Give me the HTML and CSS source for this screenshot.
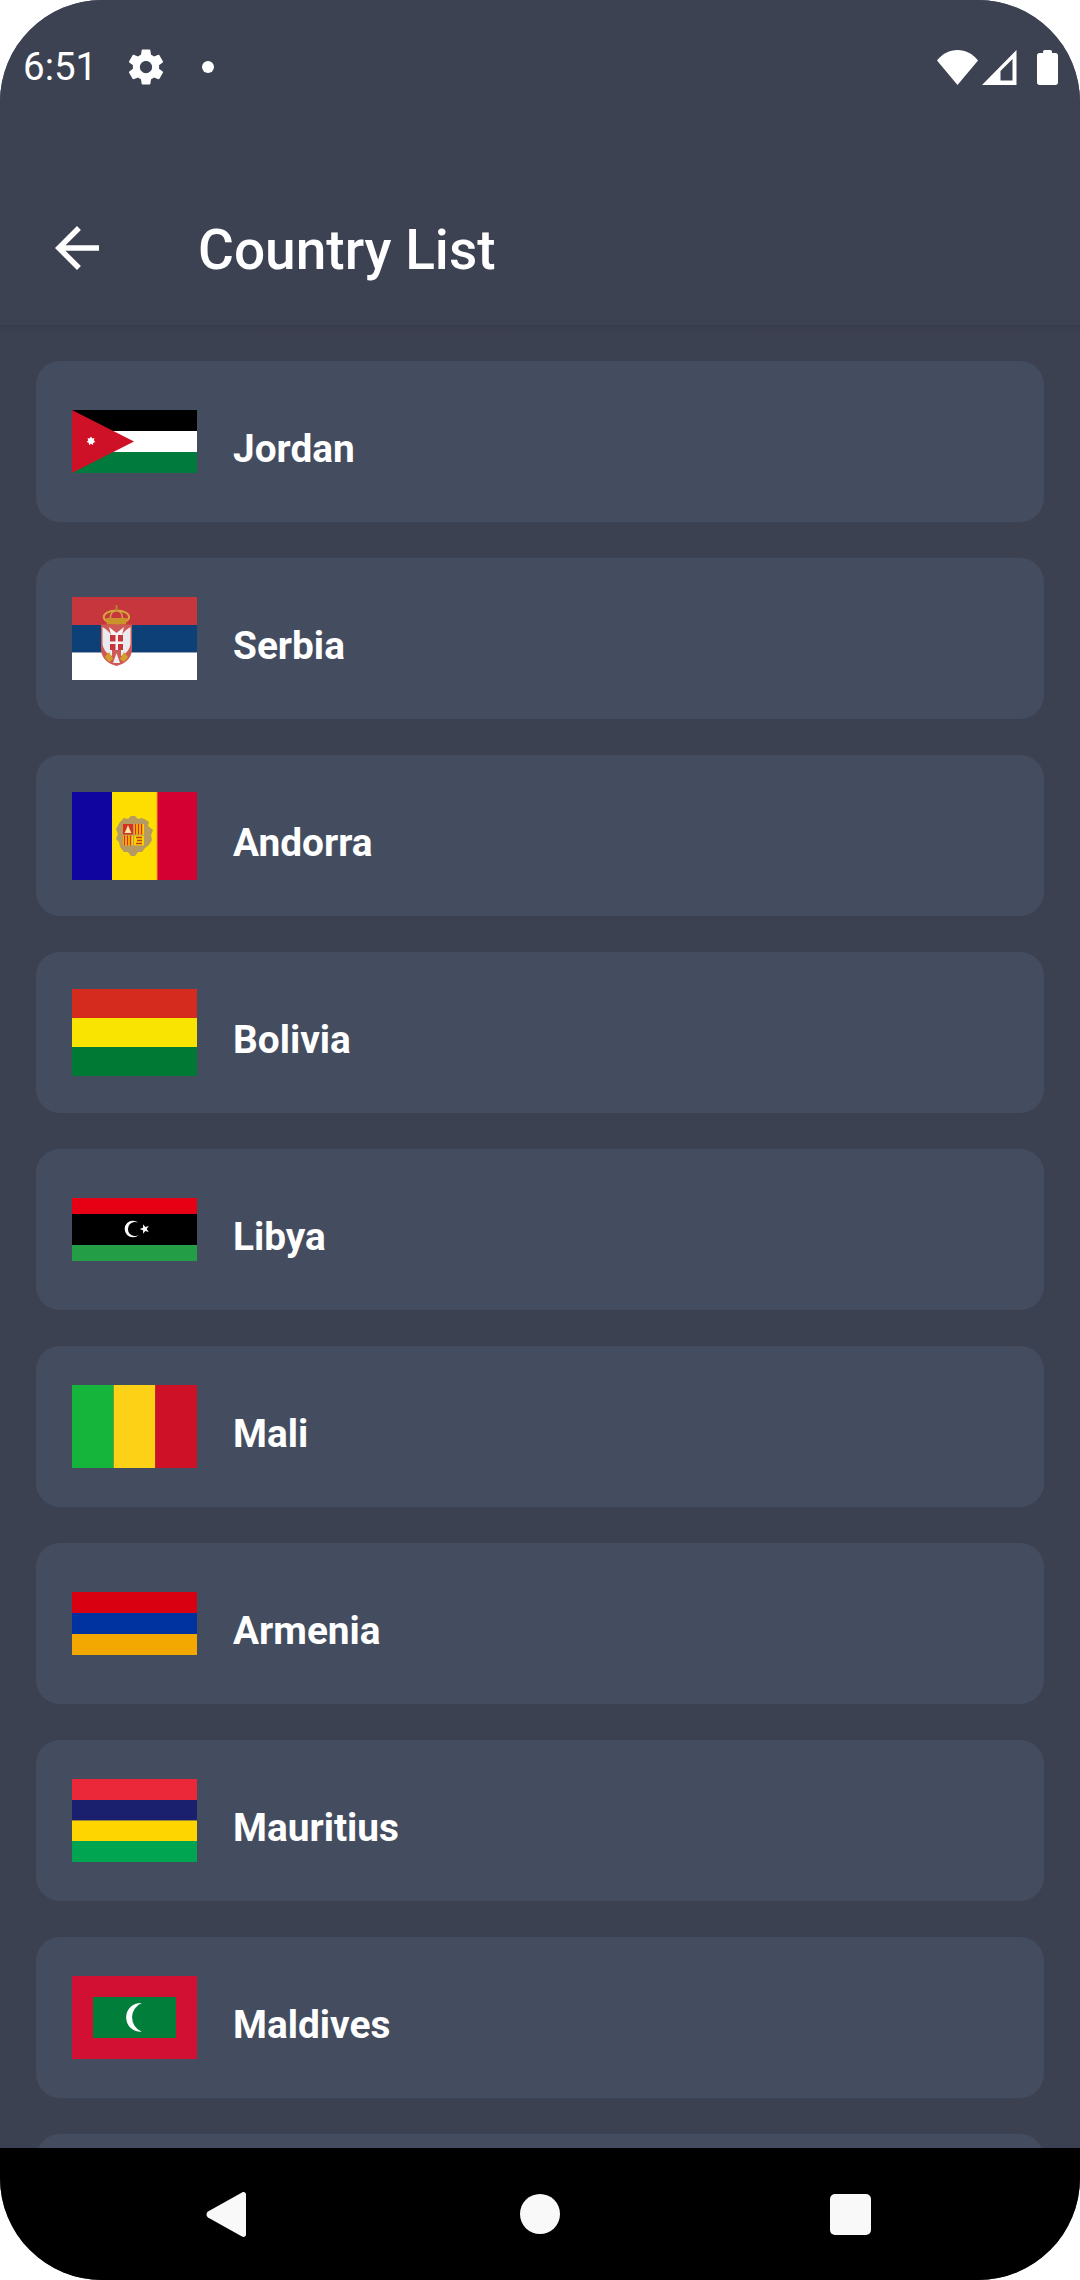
FILE: index.html
```html
<!DOCTYPE html>
<html lang="en">
<head>
<meta charset="utf-8">
<title>Country List</title>
<link rel="stylesheet" href="styles.css">
</head>
<body>
<div class="screen">
  <header class="header">
    <div class="status">
      <div class="status-left">
        <span class="time">6:51</span>
        <svg class="gear" width="42" height="42" viewBox="0 0 24 24"><path d="M19.430 12.980c.04-.32.07-.64.07-.98s-.03-.66-.07-.98l2.110-1.650c.19-.15.24-.42.12-.64l-2-3.460c-.12-.22-.39-.3-.61-.22l-2.490 1c-.52-.4-1.080-.73-1.690-.98l-.38-2.650C14.460 2.180 14.250 2 14 2h-4c-.25 0-.46.18-.49.42l-.38 2.650c-.61.25-1.170.59-1.690.98l-2.490-1c-.23-.09-.49 0-.61.22l-2 3.460c-.13.22-.07.49.12.64l2.110 1.650c-.04.32-.07.65-.07.98s.03.66.07.98l-2.110 1.650c-.19.15-.24.42-.12.64l2 3.460c.12.22.39.3.61.22l2.490-1c.52.4 1.080.73 1.690.98l.38 2.650c.03.24.24.42.49.42h4c.25 0 .46-.18.49-.42l.38-2.650c.61-.25 1.170-.59 1.690-.98l2.490 1c.23.09.49 0 .61-.22l2-3.460c.12-.22.07-.49-.12-.64l-2.110-1.650zM12 15.500c-1.930 0-3.500-1.570-3.500-3.500s1.570-3.500 3.500-3.500 3.500 1.570 3.500 3.500-1.570 3.500-3.500 3.500z" fill="#fff"/></svg>
        <span class="dot"></span>
      </div>
      <div class="status-right">
        <svg width="41" height="35" viewBox="0 0 41 35"><path d="M0 10.500C5.500 3.500 12.500 0 20.500 0S35.500 3.500 41 10.500L20.500 35z" fill="#fff"/></svg>
        <svg width="35" height="35" viewBox="0 0 35 35"><path fill-rule="evenodd" d="M34.500 0V35H0zM30.500 9 18.500 21V30.500H30.500z" fill="#fff"/></svg>
        <svg class="battery" width="21" height="35" viewBox="0 0 21 35"><path d="M6 2c0-1 .5-2 1.500-2h6c1 0 1.500 1 1.500 2v1h3.500C20 3 21 4 21 5.500V32.500C21 34 20 35 18.500 35H2.500C1 35 0 34 0 32.500V5.500C0 4 1 3 2.500 3H6z" fill="#fff"/></svg>
      </div>
    </div>
    <div class="appbar">
      <svg class="back" width="66" height="66" viewBox="0 0 24 24"><path d="M20 11H7.830l5.590-5.590L12 4l-8 8 8 8 1.410-1.410L7.830 13H20v-2z" fill="#fff"/></svg>
      <h1 class="title">Country List</h1>
    </div>
  </header>

  <main class="list">
    <div class="card">
      <svg class="flag" width="125" height="63" viewBox="0 0 125 63">
        <rect width="125" height="21" fill="#000"/>
        <rect y="21" width="125" height="21" fill="#fff"/>
        <rect y="42" width="125" height="21" fill="#007a3d"/>
        <path d="M0 0 62 31.500 0 63z" fill="#ce1126"/>
        <path d="M19 26.500 20.300 28.400 22.500 28.100 21.700 30.300 23.400 32 21.200 32.700 21 35 19 33.700 17 35 16.800 32.700 14.600 32 16.300 30.300 15.500 28.100 17.700 28.400z" fill="#fff"/>
      </svg>
      <span class="name">Jordan</span>
    </div>

    <div class="card">
      <svg class="flag" width="125" height="83" viewBox="0 0 125 83">
        <rect width="125" height="28" fill="#c6363c"/>
        <rect y="28" width="125" height="27.500" fill="#0c4076"/>
        <rect y="55.500" width="125" height="27.500" fill="#fff"/>
        <ellipse cx="44.400" cy="20" rx="12.700" ry="6.500" fill="#c6363c" stroke="#d3a63c" stroke-width="2"/>
        <ellipse cx="44.400" cy="20" rx="6" ry="6.500" fill="none" stroke="#d3a63c" stroke-width="1.500"/>
        <rect x="43.600" y="8" width="1.800" height="6" fill="#b8862c"/>
        <path d="M34 21H55L54 27.500H35z" fill="#c9932a"/>
        <path d="M29 27.500H60V52C60 62 52 67 44.500 69 37 67 29 62 29 52z" fill="#cf5a55"/>
        <path d="M30.500 30C36 33 39 37 40 40V59C35 57 31 52 30.500 47zM58.500 30C53 33 50 37 49 40V59C54 57 58 52 58.500 47z" fill="#e9ebee"/>
        <path d="M37 30 44.500 36 52 30 50 38H39z" fill="#f4f4f4"/>
        <rect x="38" y="38" width="13" height="15" fill="#c6363c"/>
        <rect x="43.500" y="38" width="2.500" height="15" fill="#f4f4f4"/>
        <rect x="38" y="44.500" width="13" height="2.500" fill="#f4f4f4"/>
        <path d="M33 60 37 55 41 62 37 65zM56 60 52 55 48 62 52 65z" fill="#d4a02c"/>
        <path d="M41 66 44.500 56 48 66z" fill="#f0f0f0"/>
      </svg>
      <span class="name">Serbia</span>
    </div>

    <div class="card">
      <svg class="flag" width="125" height="88" viewBox="0 0 125 88">
        <rect width="40" height="88" fill="#10069f"/>
        <rect x="40" width="45" height="88" fill="#fedd00"/>
        <rect x="85" width="40" height="88" fill="#d50032"/>
        <rect x="84.500" width="1" height="88" fill="#f0a020"/>
        <path d="M48 30 52 26 56 27 59 24 63 24 66 27 70 26 74 28 77 30 76 34 81 38 79 43 80 48 77 53 73 56 70 60 66 60 63 64 59 64 56 60 52 60 48 55 47 50 44 47 46 42 44 37z" fill="#b59a62"/>
        <rect x="51" y="32" width="10" height="10.500" fill="#d8301f"/>
        <path d="M56 33l2 5 1.500 3h-7l1.500-3z" fill="#f6e9a8"/>
        <rect x="62" y="32" width="10" height="10.500" fill="#fbd000"/>
        <rect x="51" y="43.500" width="10" height="10" fill="#fbd000"/>
        <path d="M63.500 32v10.500M66.500 32v10.500M69.500 32v10.500M52.500 43.500v10M55.500 43.500v10M58.500 43.500v10" stroke="#d8301f" stroke-width="1.500"/>
        <rect x="62" y="43.500" width="10" height="10" fill="#fbd000"/>
        <path d="M64 45.500h6M65 48.500h5M64 51.500h6" stroke="#c83a1c" stroke-width="1.600"/>
      </svg>
      <span class="name">Andorra</span>
    </div>

    <div class="card">
      <svg class="flag" width="125" height="87" viewBox="0 0 125 87">
        <rect width="125" height="29" fill="#d52b1e"/>
        <rect y="29" width="125" height="29" fill="#f9e300"/>
        <rect y="58" width="125" height="29" fill="#007934"/>
      </svg>
      <span class="name">Bolivia</span>
    </div>

    <div class="card">
      <svg class="flag" width="125" height="63" viewBox="0 0 125 63">
        <rect width="125" height="16" fill="#e70013"/>
        <rect y="16" width="125" height="31" fill="#000"/>
        <rect y="47" width="125" height="16" fill="#239e46"/>
        <path d="M67 25.300A8.300 8.300 0 1 0 67 36.700 7 7 0 1 1 67 25.300z" fill="#fff"/>
        <path d="M67.700 31 71.080 29.820 71.150 26.250 73.320 29.100 76.750 28.060 74.700 31 76.750 33.940 73.320 32.900 71.150 35.750 71.080 32.180z" fill="#fff"/>
      </svg>
      <span class="name">Libya</span>
    </div>

    <div class="card">
      <svg class="flag" width="125" height="83" viewBox="0 0 125 83">
        <rect width="41.700" height="83" fill="#14b53a"/>
        <rect x="41.700" width="41.600" height="83" fill="#fcd116"/>
        <rect x="83.300" width="41.700" height="83" fill="#ce1126"/>
      </svg>
      <span class="name">Mali</span>
    </div>

    <div class="card">
      <svg class="flag" width="125" height="63" viewBox="0 0 125 63">
        <rect width="125" height="21" fill="#d90012"/>
        <rect y="21" width="125" height="21" fill="#0033a0"/>
        <rect y="42" width="125" height="21" fill="#f2a800"/>
      </svg>
      <span class="name">Armenia</span>
    </div>

    <div class="card">
      <svg class="flag" width="125" height="83" viewBox="0 0 125 83">
        <rect width="125" height="21" fill="#ea2839"/>
        <rect y="21" width="125" height="20.500" fill="#1a206d"/>
        <rect y="41.500" width="125" height="20.500" fill="#ffd500"/>
        <rect y="62" width="125" height="21" fill="#00a551"/>
      </svg>
      <span class="name">Mauritius</span>
    </div>

    <div class="card">
      <svg class="flag" width="125" height="83" viewBox="0 0 125 83">
        <rect width="125" height="83" fill="#d21034"/>
        <rect x="21" y="21" width="83" height="41" fill="#007e3a"/>
        <path d="M69.700 27A14.400 14.400 0 1 0 69.700 55.700 15.500 15.500 0 0 1 69.700 27z" fill="#fff"/>
      </svg>
      <span class="name">Maldives</span>
    </div>

    <div class="card"></div>
  </main>

  <nav class="navbar">
    <svg width="41" height="47" viewBox="0 0 41 47"><path d="M2 20.500 36 1.500C38 .5 40 1.500 40 3.500V43.500C40 45.500 38 46.500 36 45.500L2 26.500C0 25 0 22 2 20.500z" fill="#f9f9f9"/></svg>
    <span class="nav-circle"></span>
    <span class="nav-square"></span>
  </nav>
</div>
</body>
</html>
```
FILE: styles.css
```css
* { box-sizing: border-box; }
html, body { margin: 0; padding: 0; background: #fff; }
body { width: 1080px; height: 2280px; font-family: Roboto, "Noto Sans", sans-serif; color: #fff; }
.screen { width: 1080px; height: 2280px; border-radius: 102px; overflow: hidden; display: flex; flex-direction: column; background: #3c4151; }
.header { height: 325px; flex: none; background: #3d4252; }
.status { height: 134px; display: flex; justify-content: space-between; align-items: center; padding: 0 22px 0 23px; }
.status-left { display: flex; align-items: center; }
.time { font-size: 38.5px; line-height: 44px; width: 102px; }
.gear { display: block; }
.dot { width: 12px; height: 12px; border-radius: 50%; background: #fff; margin-left: 35px; }
.status-right { display: flex; align-items: center; gap: 4px; }
.battery { margin-left: 16px; }
.appbar { display: flex; align-items: flex-start; padding: 81px 0 0 44px; }
.back { display: block; flex: none; }
.title { margin: 2px 0 0 88px; font-size: 55px; line-height: 66px; font-weight: 500; }
.list { flex: 1; min-height: 0; overflow: hidden; padding: 36px 36px 0; display: flex; flex-direction: column; gap: 36px; background: linear-gradient(#383c4b, #3c4151 10px); }
.card { flex: none; height: 161px; border-radius: 24px; background: #444d5f; display: flex; align-items: center; padding: 0 36px; gap: 36px; }
.flag { display: block; flex: none; }
.name { font-size: 38.8px; line-height: 46px; font-weight: 700; padding-top: 14px; }
.navbar { flex: none; height: 132px; background: #000; display: flex; align-items: center; padding: 0 209px 0 206px; justify-content: space-between; }
.nav-circle { width: 40px; height: 40px; border-radius: 50%; background: #f9f9f9; margin-left: 3px; }
.nav-square { width: 41px; height: 41px; border-radius: 5px; background: #f9f9f9; }
```
